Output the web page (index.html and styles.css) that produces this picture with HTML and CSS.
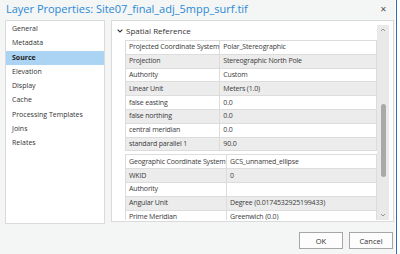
FILE: index.html
```html
<!DOCTYPE html>
<html>
<head>
<meta charset="utf-8">
<link rel="stylesheet" href="styles.css">
</head>
<body>
<div class="window">
  <div class="titlebar">
    <span class="title">Layer Properties: Site07_final_adj_5mpp_surf.tif</span>
    <span class="close">&#x2715;</span>
  </div>
  <div class="main">
    <ul class="nav">
      <li>General</li>
      <li>Metadata</li>
      <li class="active">Source</li>
      <li>Elevation</li>
      <li>Display</li>
      <li>Cache</li>
      <li>Processing Templates</li>
      <li>Joins</li>
      <li>Relates</li>
    </ul>
    <div class="panel">
      <div class="scroll">
        <div class="section-head">
          <svg class="chev" width="6" height="4" viewBox="0 0 6 4"><path d="M0.6 0.6 L3 3 L5.4 0.6" fill="none" stroke="#333" stroke-width="1.1"/></svg>
          <span>Spatial Reference</span>
        </div>
        <table class="props t1">
          <tr><td class="k">Projected Coordinate System</td><td>Polar_Stereographic</td></tr>
          <tr class="alt"><td class="k">Projection</td><td>Stereographic North Pole</td></tr>
          <tr><td class="k">Authority</td><td>Custom</td></tr>
          <tr class="alt"><td class="k">Linear Unit</td><td>Meters (1.0)</td></tr>
          <tr><td class="k">false easting</td><td>0.0</td></tr>
          <tr class="alt"><td class="k">false northing</td><td>0.0</td></tr>
          <tr><td class="k">central meridian</td><td>0.0</td></tr>
          <tr class="alt"><td class="k">standard parallel 1</td><td>90.0</td></tr>
        </table>
        <table class="props t2">
          <tr><td class="k">Geographic Coordinate System</td><td>GCS_unnamed_ellipse</td></tr>
          <tr class="alt"><td class="k">WKID</td><td>0</td></tr>
          <tr><td class="k">Authority</td><td></td></tr>
          <tr class="alt"><td class="k">Angular Unit</td><td>Degree (0.0174532925199433)</td></tr>
          <tr><td class="k">Prime Meridian</td><td>Greenwich (0.0)</td></tr>
        </table>
      </div>
      <div class="scrollbar">
        <svg class="arr" width="12" height="10" viewBox="0 0 12 10"><path d="M4 6 L6 4 L8 6" fill="none" stroke="#8a8a8a" stroke-width="0.9"/></svg>
        <div class="track"><div class="thumb"></div></div>
        <svg class="arr" width="12" height="10" viewBox="0 0 12 10"><path d="M4 4 L6 6 L8 4" fill="none" stroke="#8a8a8a" stroke-width="0.9"/></svg>
      </div>
    </div>
  </div>
  <div class="footer">
    <button class="btn">OK</button>
    <button class="btn">Cancel</button>
  </div>
</div>
<div class="edge"></div>
</body>
</html>
```

FILE: styles.css
```css
html, body {
  margin: 0;
  padding: 0;
}
body {
  width: 400px;
  height: 254px;
  overflow: hidden;
  background: #ffffff;
  font-family: "Open Sans", "Noto Sans", sans-serif;
  color: #333333;
  position: relative;
}
.window {
  width: 395px;
  height: 254px;
  background: #f4f5f5;
  display: flex;
  flex-direction: column;
}
.titlebar {
  height: 20px;
  display: flex;
  align-items: center;
  justify-content: space-between;
  padding: 0 8px 0 6px;
}
.title {
  color: #2a8ad6;
  font-size: 11px;
  line-height: 20px;
  margin-top: -2px;
}
.close {
  font-size: 8px;
  color: #555;
  margin-top: -3px;
}
.main {
  display: flex;
  gap: 6px;
  padding-left: 5px;
  height: 202px;
}
.nav {
  list-style: none;
  margin: 0;
  padding: 1px 0 0 0;
  width: 98px;
  height: 201px;
  background: #fff;
  border: 1px solid #dadada;
}
.nav li {
  height: 14.3px;
  line-height: 14.3px;
  font-size: 7px;
  padding-left: 6px;
  color: #333;
}
.nav li.active {
  background: #aad3f4;
  font-weight: 700;
  color: #222;
}
.panel {
  width: 281px;
  height: 200px;
  background: #fff;
  border: 1px solid #dadada;
  display: flex;
}
.scroll {
  width: 265px;
  height: 199px;
  overflow: hidden;
}
.section-head {
  height: 19px;
  display: flex;
  align-items: center;
  gap: 3px;
  padding-left: 5px;
  font-size: 8px;
  color: #333;
}
.chev {
  margin-top: 1px;
}
.props {
  border-collapse: collapse;
  margin-left: 13px;
  width: 252px;
  font-size: 7px;
  letter-spacing: -0.16px;
  color: #3a3a3a;
}
.props td {
  height: 12.8px;
  padding: 0 0 0 3px;
  border: 1px solid #dcdcdc;
  white-space: nowrap;
  line-height: 12px;
}
.props tr.alt td {
  background: #ececec;
}
.t1 .k { width: 90px; }
.t2 { margin-top: 3px; }
.t2 .k { width: 97px; }
.scrollbar {
  width: 12px;
  margin-top: 4px;
  height: 195px;
  background: #e9e9e9;
  display: flex;
  flex-direction: column;
  align-items: center;
}
.arr { flex: none; }
.track {
  flex: 1;
  width: 12px;
  position: relative;
}
.thumb {
  position: absolute;
  left: 4px;
  top: 69px;
  width: 5px;
  height: 73px;
  border-radius: 3px;
  background: #a9a9a9;
}
.footer {
  flex: 1;
  display: flex;
  justify-content: flex-end;
  align-items: flex-start;
  gap: 6px;
  padding: 10px 2px 0 0;
}
.btn {
  width: 44px;
  height: 17px;
  background: #fdfdfd;
  border: 1px solid #a6a6a6;
  font-family: "Open Sans", "Noto Sans", sans-serif;
  font-size: 7.5px;
  color: #333;
  padding: 0;
  margin: 0;
}
.edge {
  position: absolute;
  left: 396px;
  top: 0;
  width: 1px;
  height: 254px;
  background: #2d6fb0;
}
```
